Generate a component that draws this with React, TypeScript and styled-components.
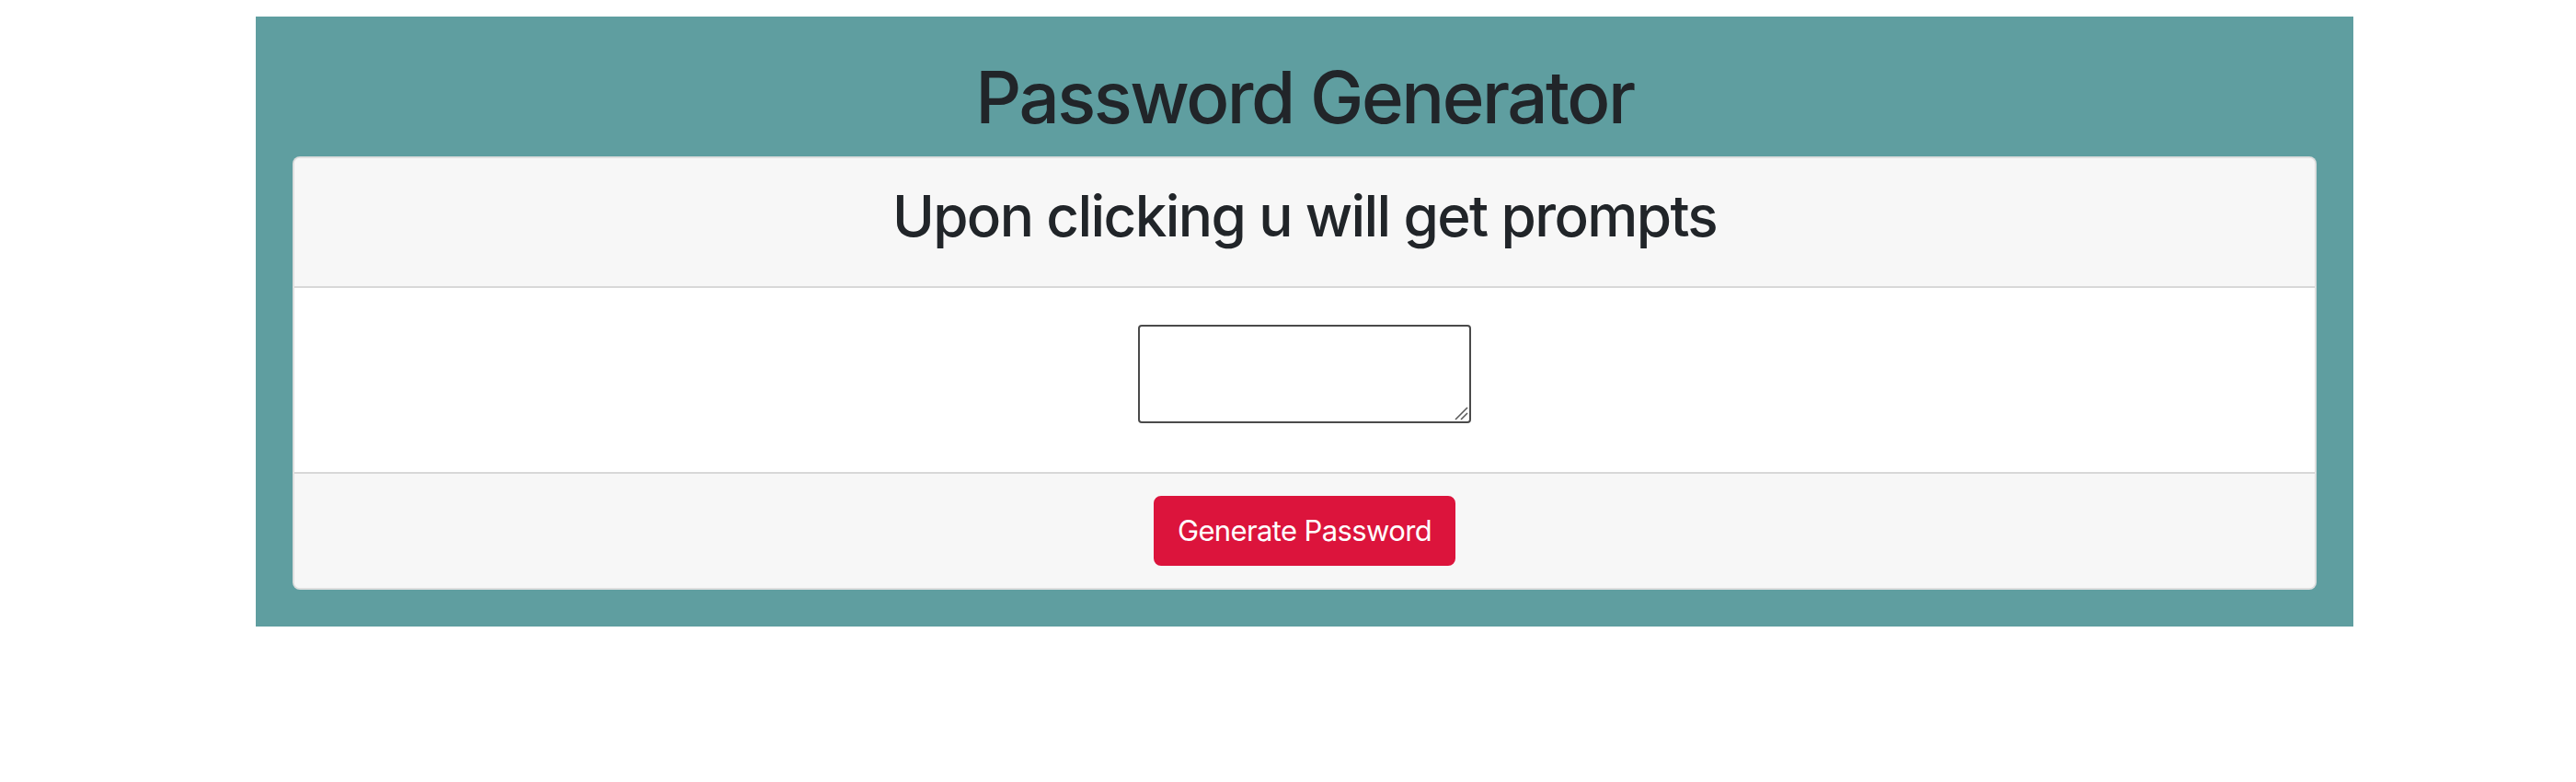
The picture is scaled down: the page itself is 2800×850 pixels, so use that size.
import React from "react";
import styled, { createGlobalStyle } from "styled-components";

const GlobalStyle = createGlobalStyle`
  html, body { margin: 0; padding: 0; background: #ffffff; }
  body {
    font-family: Inter, "Noto Sans", "Liberation Sans", sans-serif;
    color: #212529;
  }
  * { box-sizing: border-box; }
`;

const Page = styled.div`
  display: flex;
  justify-content: center;
  padding: 18px 242px 0 278px;
`;

const Wrapper = styled.main`
  width: 2280px;
  background: #5f9ea0;
  padding: 40px;
`;

const Title = styled.h1`
  margin: 0 0 16px;
  font-size: 78px;
  font-weight: 500;
  line-height: 96px;
  letter-spacing: -0.032em;
  text-align: center;
`;

const Card = styled.section`
  background: #ffffff;
  border: 2px solid rgba(0, 0, 0, 0.125);
  border-radius: 8px;
  overflow: hidden;
`;

const CardHeader = styled.header`
  background: #f7f7f7;
  border-bottom: 2px solid rgba(0, 0, 0, 0.125);
  padding: 24px 40px;
`;

const HeaderTitle = styled.h2`
  margin: 0 0 14px;
  font-size: 62px;
  font-weight: 500;
  line-height: 77px;
  letter-spacing: -0.026em;
  text-align: center;
`;

const CardBody = styled.div`
  display: flex;
  justify-content: center;
  padding: 40px 40px 53px;
`;

const AreaWrap = styled.div`
  position: relative;
  width: 362px;
  height: 107px;
`;

const TextArea = styled.textarea`
  display: block;
  width: 100%;
  height: 100%;
  border: 2px solid #4a4a4a;
  border-radius: 4px;
  background: #ffffff;
  resize: none;
  outline: none;
  font-family: "Liberation Mono", monospace;
  font-size: 26px;
`;

const Grip = styled.svg`
  position: absolute;
  right: 3px;
  bottom: 3px;
  width: 16px;
  height: 16px;
  pointer-events: none;
`;

const CardFooter = styled.footer`
  display: flex;
  justify-content: center;
  background: #f7f7f7;
  border-top: 2px solid rgba(0, 0, 0, 0.125);
  padding: 24px 40px;
`;

const Button = styled.button`
  font-family: Inter, "Noto Sans", "Liberation Sans", sans-serif;
  font-size: 31px;
  font-weight: 400;
  line-height: 48px;
  letter-spacing: -0.02em;
  color: #ffffff;
  background: #dc143c;
  border: 2px solid #dc143c;
  border-radius: 8px;
  padding: 12px 24px;
  cursor: pointer;
`;

export default function App() {
  return (
    <>
      <GlobalStyle />
      <Page>
        <Wrapper>
          <Title>Password Generator</Title>
          <Card>
            <CardHeader>
              <HeaderTitle>Upon clicking u will get prompts</HeaderTitle>
            </CardHeader>
            <CardBody>
              <AreaWrap>
                <TextArea id="password" aria-label="Generated password" readOnly />
                <Grip viewBox="0 0 16 16">
                  <line x1="2" y1="15" x2="15" y2="2" stroke="#5a5a5a" strokeWidth="1.6" />
                  <line x1="8" y1="15" x2="15" y2="8" stroke="#5a5a5a" strokeWidth="1.6" />
                </Grip>
              </AreaWrap>
            </CardBody>
            <CardFooter>
              <Button type="button">Generate Password</Button>
            </CardFooter>
          </Card>
        </Wrapper>
      </Page>
    </>
  );
}
